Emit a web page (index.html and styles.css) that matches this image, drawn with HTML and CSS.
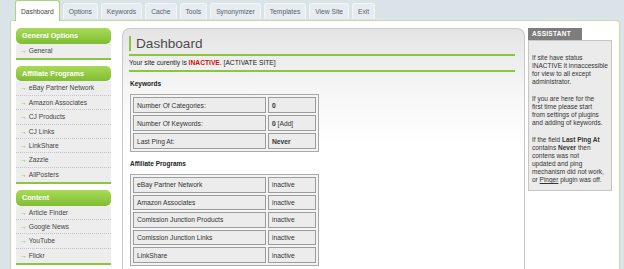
FILE: index.html
```html
<!DOCTYPE html>
<html lang="en">
<head>
    <meta charset="UTF-8">
    <title>Dashboard</title>
    <link rel="stylesheet" href="styles.css">
</head>
<body>
    <nav class="tabs">
        <a href="#" class="tab active">Dashboard</a>
        <a href="#" class="tab">Options</a>
        <a href="#" class="tab">Keywords</a>
        <a href="#" class="tab">Cache</a>
        <a href="#" class="tab">Tools</a>
        <a href="#" class="tab">Synonymizer</a>
        <a href="#" class="tab">Templates</a>
        <a href="#" class="tab">View Site</a>
        <a href="#" class="tab">Exit</a>
    </nav>

    <div class="frame">
        <aside class="sidebar">
            <div class="menu">
                <h3 class="menu-title">General Options</h3>
                <a href="#" class="menu-item">General</a>
            </div>
            <div class="menu">
                <h3 class="menu-title">Affiliate Programs</h3>
                <a href="#" class="menu-item">eBay Partner Network</a>
                <a href="#" class="menu-item">Amazon Associates</a>
                <a href="#" class="menu-item">CJ Products</a>
                <a href="#" class="menu-item">CJ Links</a>
                <a href="#" class="menu-item">LinkShare</a>
                <a href="#" class="menu-item">Zazzle</a>
                <a href="#" class="menu-item">AllPosters</a>
            </div>
            <div class="menu">
                <h3 class="menu-title">Content</h3>
                <a href="#" class="menu-item">Article Finder</a>
                <a href="#" class="menu-item">Google News</a>
                <a href="#" class="menu-item">YouTube</a>
                <a href="#" class="menu-item">Flickr</a>
            </div>
        </aside>

        <main class="content">
            <h1 class="page-title">Dashboard</h1>
            <p class="status">Your site curently is <span class="inactive">INACTIVE</span>. [ACTIVATE SITE]</p>

            <h4 class="block-title">Keywords</h4>
            <table class="info-table">
                <tr><td class="label">Number Of Categories:</td><td><b>0</b></td></tr>
                <tr><td class="label">Number Of Keywords:</td><td><b>0</b> [Add]</td></tr>
                <tr><td class="label">Last Ping At:</td><td><b>Never</b></td></tr>
            </table>

            <h4 class="block-title">Affiliate Programs</h4>
            <table class="info-table programs">
                <tr><td class="label">eBay Partner Network</td><td>inactive</td></tr>
                <tr><td class="label">Amazon Associates</td><td>inactive</td></tr>
                <tr><td class="label">Comission Junction Products</td><td>inactive</td></tr>
                <tr><td class="label">Comission Junction Links</td><td>inactive</td></tr>
                <tr><td class="label">LinkShare</td><td>inactive</td></tr>
            </table>
        </main>

        <aside class="assistant">
            <div class="assistant-title">ASSISTANT</div>
            <div class="assistant-box">
                <p>If site have status<br>INACTIVE it innaccessible<br>for view to all except<br>administrator.</p>
                <p>If you are here for the<br>first time please start<br>from settings of plugins<br>and adding of keywords.</p>
                <p>If the field <b>Last Ping At</b><br>contains <b>Never</b> then<br>contens was not<br>updated and ping<br>mechanism did not work,<br>or <u>Pinger</u> plugin was off.</p>
            </div>
        </aside>
    </div>
</body>
</html>
```

FILE: styles.css
```css
:root {
    --green: #8cc540;
    --frame-border: #c3e0a3;
    --page-bg: #dae3e8;
    --text-color: #3c3c3c;
}

* {
    margin: 0;
    padding: 0;
    box-sizing: border-box;
}

body {
    background: var(--page-bg);
    font-family: "Liberation Sans", Arial, sans-serif;
    font-size: 6.7px;
    color: var(--text-color);
    height: 269px;
    overflow: hidden;
}

/* top tabs */
.tabs {
    display: flex;
    align-items: flex-end;
    gap: 3px;
    height: 20px;
    padding-left: 15px;
    position: relative;
    z-index: 1;
}

.tab {
    display: block;
    height: 16px;
    line-height: 16px;
    padding: 0 5px;
    background: #e6ecef;
    border: 1px solid #f3f6f7;
    border-bottom: none;
    border-radius: 3px 3px 0 0;
    color: #556070;
    text-decoration: none;
    margin-bottom: 1px;
}

.tab.active {
    height: 21px;
    line-height: 22px;
    margin-bottom: -1px;
    background: #fff;
    border: 1px solid #a9d47a;
    border-bottom: none;
    color: #444;
}

/* white frame */
.frame {
    display: flex;
    align-items: flex-start;
    margin: 0 4px 0 10px;
    height: 260px;
    padding: 7px 6px 0 5px;
    background: #fff;
    border: 1px solid var(--frame-border);
    border-radius: 0 4px 0 0;
}

/* left menu */
.sidebar {
    width: 95px;
    flex-shrink: 0;
}

.menu {
    border-bottom: 2px solid var(--green);
    margin-bottom: 6px;
}

.menu-title {
    height: 15.5px;
    line-height: 15.5px;
    padding-left: 6px;
    font-size: 7.2px;
    font-weight: bold;
    color: #fff;
    background: linear-gradient(#a9da58, #80bd33);
    border-radius: 5px;
}

.menu-item {
    display: block;
    height: 14.4px;
    line-height: 14px;
    padding-left: 4px;
    background: #ededed;
    border-bottom: 1px dotted #c4c4c4;
    color: #444;
    text-decoration: none;
}

.menu-item:last-child {
    border-bottom: none;
}

.menu-item::before {
    content: "\2192";
    color: #6fb22a;
    margin-right: 2px;
}

/* main panel */
.content {
    width: 403px;
    flex-shrink: 0;
    margin-left: 11px;
    height: 260px;
    padding: 7px 9px 0 6px;
    background: linear-gradient(#e4e4e4, #f6f6f6 60px, #fff 120px);
    border: 1px solid #c9c9c9;
    border-bottom: none;
    border-radius: 8px 8px 0 0;
}

.page-title {
    font-size: 13.6px;
    font-weight: normal;
    color: #4c4c4c;
    line-height: 15px;
    padding-left: 5px;
    border-left: 2px solid var(--green);
    margin-bottom: 3px;
}

.status {
    border-top: 2px solid var(--green);
    border-bottom: 2px solid var(--green);
    padding: 2px 0 3px;
    line-height: 9px;
    color: #222;
}

.inactive {
    color: #cc1111;
    font-weight: bold;
}

.block-title {
    font-size: 6.5px;
    font-weight: bold;
    color: #222;
    margin: 8px 0 7px 1px;
}

.info-table {
    width: 189px;
    margin-left: 1px;
    border: 1px solid #a8a8a8;
    border-spacing: 2px;
    background: #f4f4f4;
}

.info-table td {
    height: 16px;
    padding: 0 3px;
    background: #ececec;
    border: 1px solid #9c9c9c;
    color: #333;
}

.info-table .label {
    width: 133px;
}

.programs td {
    height: 15.6px;
}

/* assistant */
.assistant {
    width: 84px;
    flex-shrink: 0;
    margin-left: 3px;
}

.assistant-title {
    display: inline-block;
    height: 12px;
    line-height: 12px;
    padding: 0 11px 0 4px;
    background: #7d7d7d;
    color: #fff;
    font-weight: bold;
    font-size: 6.5px;
    letter-spacing: 0.3px;
}

.assistant-box {
    background: #ebebeb;
    border: 1px solid #c6c6c6;
    padding: 13px 2px 6px 3px;
    font-size: 6.5px;
    line-height: 8px;
    color: #333;
    white-space: nowrap;
}

.assistant-box p {
    margin-bottom: 9px;
}

.assistant-box p:last-child {
    margin-bottom: 0;
}
```
